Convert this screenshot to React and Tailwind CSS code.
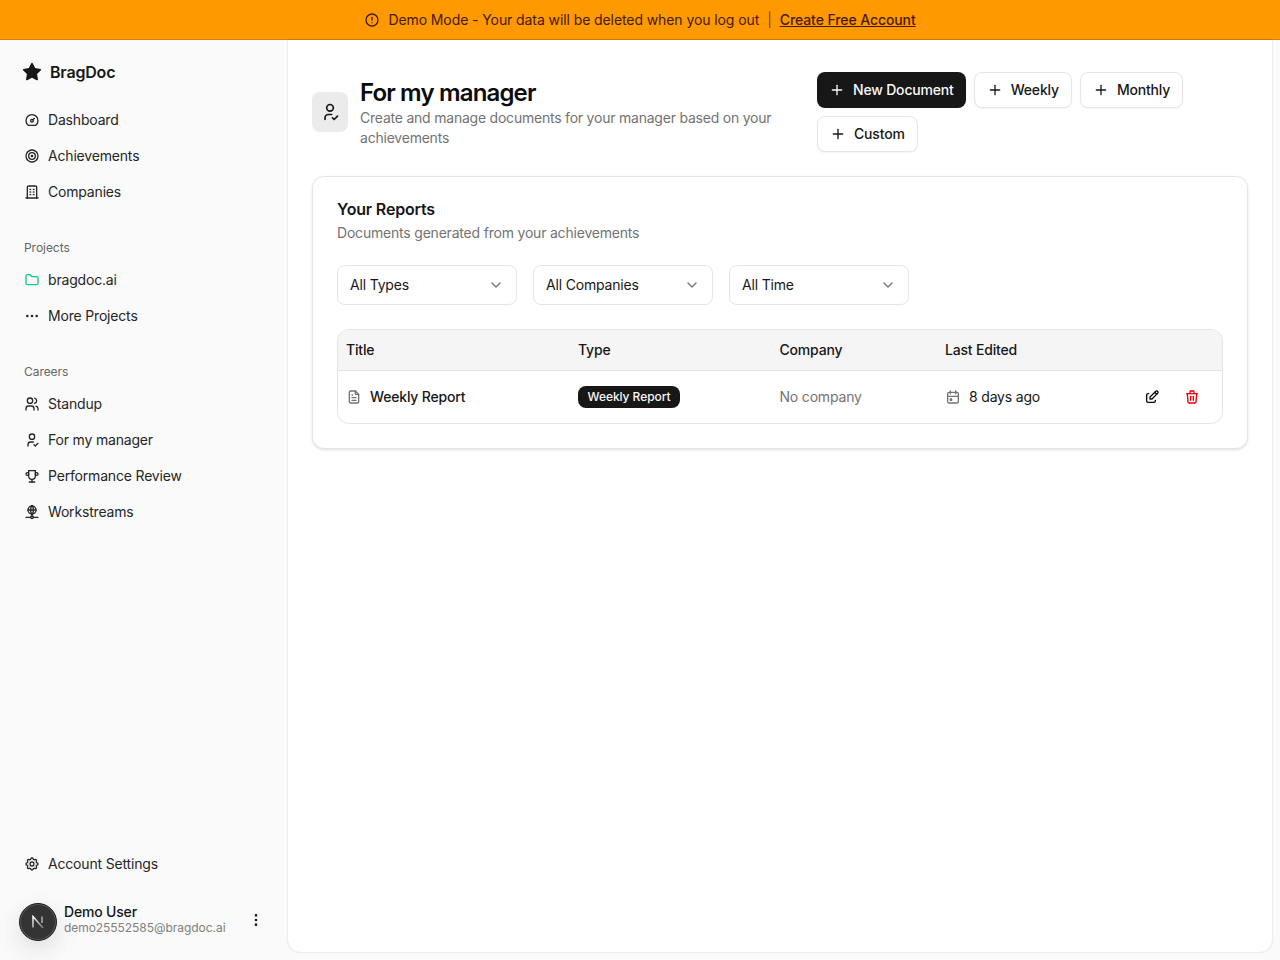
import React from "react";
import {
  TbAlertCircle, TbStarFilled, TbDashboard, TbTarget, TbBuilding, TbFolder, TbDots, TbUsers,
  TbUserCheck, TbTrophy, TbNetwork, TbSettings, TbDotsVertical, TbPlus, TbChevronDown,
  TbFileText, TbCalendarEvent, TbEdit, TbTrash,
} from "react-icons/tb";

function NavItem({ icon: Icon, label, iconClass = "" }) {
  return (
    <a className="flex h-9 items-center gap-2 px-2 text-sm text-[#262626]">
      <Icon size={16} className={iconClass} />
      <span>{label}</span>
    </a>
  );
}

function Section({ title, children }) {
  return (
    <div className="flex flex-col">
      <div className="flex h-[30px] items-center px-2 pt-[2px] text-xs tracking-[-0.05px] text-[#666666]">{title}</div>
      {children}
    </div>
  );
}

function OutlineButton({ label }) {
  return (
    <button className="flex h-9 items-center gap-2 rounded-lg border border-[#e5e5e5] bg-white px-3 text-sm font-[450] text-[#171717] shadow-xs">
      <TbPlus size={16} />
      {label}
    </button>
  );
}

function Filter({ label }) {
  return (
    <button className="flex h-10 w-[180px] items-center justify-between rounded-lg border border-[#e5e5e5] bg-white px-3 text-sm text-[#171717]">
      {label}
      <TbChevronDown size={16} className="text-[#737373]" />
    </button>
  );
}

export default function App() {
  return (
    <div className="flex h-[960px] w-[1280px] flex-col overflow-hidden bg-[#fafafa] font-['Inter',sans-serif] tracking-[-0.18px] text-[#0a0a0a]">
      <div className="flex h-10 shrink-0 items-center justify-center gap-2 border-b border-[#d97f00] bg-[#ff9900] text-sm tracking-[-0.09px] text-[#451a03]">
        <TbAlertCircle size={16} />
        <span>Demo Mode - Your data will be deleted when you log out</span>
        <span className="opacity-70">|</span>
        <a className="font-[450] underline">Create Free Account</a>
      </div>
      <div className="flex min-h-0 flex-1">
        <aside className="flex w-[288px] shrink-0 flex-col">
          <div className="flex items-center gap-2 px-[22px] pt-5 pb-4 text-[#171717]">
            <TbStarFilled size={20} />
            <span className="text-base font-semibold">BragDoc</span>
          </div>
          <div className="flex flex-col px-4 pt-[2px]">
            <NavItem icon={TbDashboard} label="Dashboard" />
            <NavItem icon={TbTarget} label="Achievements" />
            <NavItem icon={TbBuilding} label="Companies" />
          </div>
          <div className="mt-[22px] flex flex-col gap-[22px] px-4">
            <Section title="Projects">
              <NavItem icon={TbFolder} label="bragdoc.ai" iconClass="text-[#10c98f]" />
              <NavItem icon={TbDots} label="More Projects" />
            </Section>
            <Section title="Careers">
              <NavItem icon={TbUsers} label="Standup" />
              <NavItem icon={TbUserCheck} label="For my manager" />
              <NavItem icon={TbTrophy} label="Performance Review" />
              <NavItem icon={TbNetwork} label="Workstreams" />
            </Section>
          </div>
          <div className="mt-auto flex flex-col px-4 pb-[19px]">
            <NavItem icon={TbSettings} label="Account Settings" />
            <div className="mt-[21px] flex items-center pl-[3px]">
              <div className="flex h-[38px] w-[38px] shrink-0 items-center justify-center rounded-full border border-[#1f1f1f] bg-[#333333] shadow-[0_8px_24px_rgba(0,0,0,0.12),inset_0_0_0_1px_rgba(255,255,255,0.18)]">
                <svg width="14" height="14" viewBox="0 0 14 14" fill="none">
                  <defs>
                    <linearGradient id="nDiagonal" x1="2" y1="2" x2="12" y2="13" gradientUnits="userSpaceOnUse">
                      <stop offset="0" stopColor="#ffffff" />
                      <stop offset="1" stopColor="#ffffff" stopOpacity="0.35" />
                    </linearGradient>
                  </defs>
                  <path d="M2 12.5V1.5L12 13" stroke="url(#nDiagonal)" strokeWidth="1.5" />
                  <path d="M11 1.5V8" stroke="#cfcfcf" strokeWidth="1.2" />
                </svg>
              </div>
              <div className="mb-[5px] ml-[7px] flex flex-1 flex-col">
                <span className="text-sm leading-4 font-[450] text-[#171717]">Demo User</span>
                <span className="text-xs leading-4 tracking-[-0.05px] text-[#808080]">demo25552585@bragdoc.ai</span>
              </div>
              <TbDotsVertical size={16} className="mr-[8px] mb-1 text-[#171717]" />
            </div>
          </div>
        </aside>
        <main className="mr-2 mb-2 flex-1 rounded-b-xl bg-white px-6 pt-8 shadow-[0_0_2px_rgba(0,0,0,0.2)]">
          <div className="flex justify-between">
            <div className="flex w-[481px] items-center gap-3">
              <div className="flex h-10 w-9 shrink-0 items-center justify-center rounded-lg bg-[#ebebeb]">
                <TbUserCheck size={20} className="text-[#171717]" />
              </div>
              <div>
                <h1 className="text-2xl leading-8 font-semibold tracking-[-0.85px]">For my manager</h1>
                <p className="mt-[-1px] text-sm leading-5 tracking-[-0.22px] text-[#737373]">
                  Create and manage documents for your manager based on your achievements
                </p>
              </div>
            </div>
            <div className="flex w-[431px] flex-wrap gap-2">
              <button className="flex h-9 items-center gap-2 rounded-lg bg-[#171717] px-3 text-sm font-[450] text-[#fafafa]">
                <TbPlus size={16} />
                New Document
              </button>
              <OutlineButton label="Weekly" />
              <OutlineButton label="Monthly" />
              <OutlineButton label="Custom" />
            </div>
          </div>
          <section className="mt-6 rounded-xl border border-[#e5e5e5] bg-white p-6 shadow-sm">
            <h2 className="text-base leading-4 font-semibold text-[#171717]">Your Reports</h2>
            <p className="mt-[6px] text-sm leading-5 tracking-[-0.2px] text-[#737373]">Documents generated from your achievements</p>
            <div className="mt-[22px] flex gap-4">
              <Filter label="All Types" />
              <Filter label="All Companies" />
              <Filter label="All Time" />
            </div>
            <div className="mt-6 overflow-hidden rounded-xl border border-[#e5e5e5]">
              <table className="w-full table-fixed text-sm text-[#171717]">
                <colgroup>
                  <col className="w-[232px]" />
                  <col className="w-[201.5px]" />
                  <col className="w-[165.5px]" />
                  <col className="w-[180px]" />
                  <col />
                </colgroup>
                <thead>
                  <tr className="h-10 border-b border-[#e5e5e5] bg-[#f5f5f5] text-left">
                    <th className="px-2 font-[450]">Title</th>
                    <th className="px-2 font-[450]">Type</th>
                    <th className="px-2 font-[450]">Company</th>
                    <th className="px-2 font-[450]">Last Edited</th>
                    <th />
                  </tr>
                </thead>
                <tbody>
                  <tr className="h-[53px]">
                    <td className="px-2">
                      <div className="flex items-center gap-2">
                        <TbFileText size={16} className="text-[#737373]" />
                        <span className="font-[450]">Weekly Report</span>
                      </div>
                    </td>
                    <td className="px-2">
                      <span className="inline-flex h-[22px] items-center rounded-lg bg-[#171717] px-[9.5px] text-xs font-[450] tracking-[-0.05px] text-[#fafafa]">
                        Weekly Report
                      </span>
                    </td>
                    <td className="px-2 text-[#737373]">No company</td>
                    <td className="px-2">
                      <div className="flex items-center gap-2">
                        <TbCalendarEvent size={16} className="text-[#737373]" />
                        <span>8 days ago</span>
                      </div>
                    </td>
                    <td className="pr-[10px]">
                      <div className="flex justify-end">
                        <button className="flex h-10 w-10 items-center justify-center text-[#0a0a0a]">
                          <TbEdit size={16} />
                        </button>
                        <button className="flex h-10 w-10 items-center justify-center text-[#e7000b]">
                          <TbTrash size={16} />
                        </button>
                      </div>
                    </td>
                  </tr>
                </tbody>
              </table>
            </div>
          </section>
        </main>
      </div>
    </div>
  );
}
